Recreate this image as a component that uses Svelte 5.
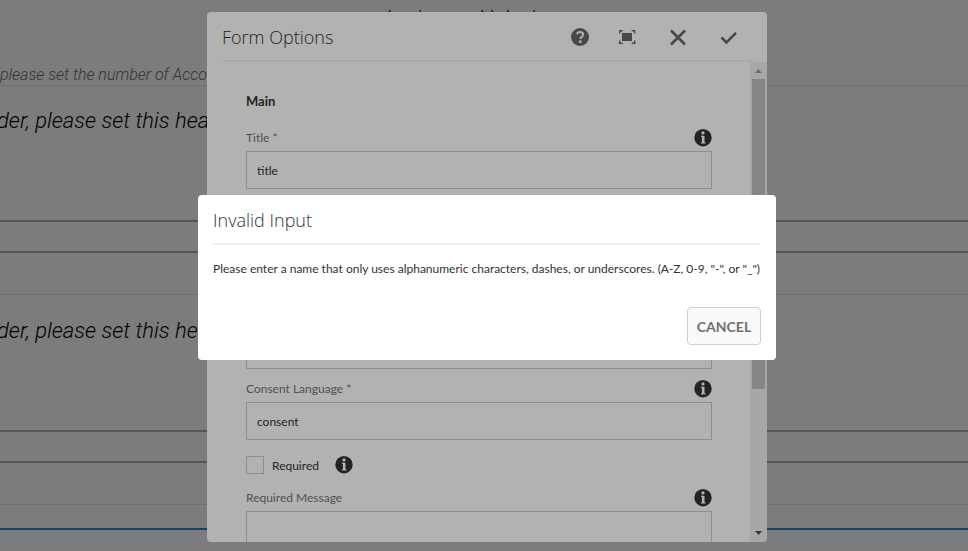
{#snippet info(label)}
  <button class="info" type="button" aria-label={label}>
    <svg viewBox="0 0 18 18" width="18" height="18" aria-hidden="true">
      <circle cx="9" cy="8.7" r="8.7" fill="#232323" />
      <circle cx="9" cy="3.9" r="1.6" fill="#b2b2b2" />
      <path d="M7 6.800h3.500v6.500h1v1.300H7v-1.300h.9V8.100H7z" fill="#b2b2b2" />
    </svg>
  </button>
{/snippet}

<div class="app">
  <main class="page">
    <p class="crumb">le mien moral à demi</p>
    <p class="note">please set the number of Accordion</p>
    <section class="panel">
      <h2>der, please set this header</h2>
      <div class="slot"></div>
    </section>
    <section class="panel">
      <h2>der, please set this header</h2>
      <div class="slot"></div>
    </section>
    <div class="end"></div>
  </main>

  <div class="layer">
    <div class="dialog" role="dialog" aria-labelledby="form-title">
      <header>
        <h1 id="form-title">Form Options</h1>
        <div class="actions">
          <button type="button" aria-label="Help">
            <svg viewBox="0 0 20 20" width="20" height="20"><circle cx="11" cy="10" r="9" fill="#484848" /><path d="M8 7.200c.4-1.600 1.500-2.200 3-2.200 1.900 0 3.100 1 3.100 2.600 0 2.200-2.700 2.300-2.700 4.400" fill="none" stroke="#b2b2b2" stroke-width="2" /><circle cx="11.300" cy="14.700" r="1.400" fill="#b2b2b2" /></svg>
          </button>
          <button type="button" aria-label="Toggle fullscreen">
            <svg viewBox="0 0 20 20" width="20" height="20"><path d="M3 6h10v8H3z" fill="#484848" /><path d="M.7 6.500V3.700h3M12.700 3.700h3v2.800M15.700 13.500v2.800h-3M3.700 16.300h-3v-2.800" fill="none" stroke="#484848" stroke-width="1.400" /></svg>
          </button>
          <button type="button" aria-label="Close">
            <svg viewBox="0 0 20 20" width="20" height="20"><path d="M2 3.500l14 14M16 3.500L2 17.500" fill="none" stroke="#484848" stroke-width="2.600" /></svg>
          </button>
          <button type="button" aria-label="Done">
            <svg viewBox="0 0 20 20" width="20" height="20"><path d="M2.500 10.500l5 5L17 5.800" fill="none" stroke="#484848" stroke-width="2.600" /></svg>
          </button>
        </div>
      </header>
      <div class="body">
        <form class="fields">
          <h3>Main</h3>
          <div class="row"><label for="title">Title *</label>{@render info('About title')}</div>
          <input id="title" type="text" value="title" />
          <div class="row gap"><label for="name">Name *</label></div>
          <input id="name" type="text" />
          <div class="row"><label for="consent">Consent Language *</label>{@render info('About consent language')}</div>
          <input id="consent" type="text" value="consent" />
          <div class="check"><input id="required" type="checkbox" /><label for="required">Required</label>{@render info('About required')}</div>
          <div class="row"><label for="message">Required Message</label>{@render info('About required message')}</div>
          <input id="message" type="text" />
        </form>
        <div class="scroll" aria-hidden="true">
          <svg viewBox="0 0 17 17" width="17" height="17"><path d="M5 11l3.500-4 3.500 4z" fill="#6c6c6c" /></svg>
          <div class="track"><div class="thumb"></div></div>
          <svg viewBox="0 0 17 17" width="17" height="17"><path d="M5 6l3.500 4L12 6z" fill="#353535" /></svg>
        </div>
      </div>
    </div>
  </div>

  <div class="layer front">
    <div class="alert" role="alertdialog" aria-labelledby="alert-title" aria-describedby="alert-text">
      <h2 id="alert-title">Invalid Input</h2>
      <p id="alert-text">Please enter a name that only uses alphanumeric characters, dashes, or underscores. (A-Z, 0-9, "-", or "_")</p>
      <button type="button">CANCEL</button>
    </div>
  </div>
</div>

<style>
  :global(body) { background: #7c7c7c; }
  .app, .app * { box-sizing: border-box; }
  .app {
    position: relative;
    height: 100vh;
    overflow: hidden;
    background: #7c7c7c;
    font-family: Lato, sans-serif;
    font-size: 12px;
    color: #232323;
  }
  h1, h2, h3, p { margin: 0; }
  button { padding: 0; border: 0; background: none; font: inherit; }
  svg { display: block; }

  .page { font-family: Roboto, sans-serif; white-space: nowrap; }
  .crumb { height: 62px; padding: 7px 44px 0 0; font-size: 16px; line-height: 20px; text-align: center; color: #111; }
  .note { height: 24px; border-bottom: 1px solid #65717c; font-size: 16px; line-height: 26px; font-style: italic; font-weight: 300; color: #333; }
  .panel { height: 209px; border-bottom: 1px solid #65717c; }
  .panel + .panel { height: 210px; }
  .panel h2 { height: 134px; padding-top: 20px; font-size: 22px; line-height: 30px; font-style: italic; font-weight: 300; text-indent: -3px; color: #000; }
  .panel + .panel h2 { height: 135px; padding-top: 21px; }
  .slot { height: 33px; border: solid #565656; border-width: 2px 0; }
  .end { height: 25px; border-bottom: 2px solid #12426c; }

  .layer {
    position: absolute;
    inset: 0;
    display: flex;
    justify-content: center;
    align-items: center;
    padding: 12px 0 9px 6px;
  }
  .front { padding-bottom: 8px; }

  .dialog {
    display: flex;
    flex-direction: column;
    width: 560px;
    height: 100%;
    border-radius: 4px;
    background: #b2b2b2;
    overflow: hidden;
  }
  header {
    display: flex;
    justify-content: space-between;
    flex: none;
    height: 50px;
    margin: 0 15px;
    border-bottom: 2px solid #a9a9a9;
  }
  h1, .alert h2 { font-family: "Open Sans", sans-serif; font-size: 18px; font-weight: 300; line-height: 50px; }
  .actions { display: flex; margin-right: -2px; }
  .actions button { display: grid; place-items: center; width: 50px; height: 50px; }
  .body { display: flex; flex: 1; min-height: 0; }
  .fields { flex: 1; padding: 24px 38px 0 39px; }
  h3 { margin-bottom: 2px; font-size: 13px; line-height: 30px; font-weight: 700; }
  .row { display: flex; justify-content: space-between; align-items: center; height: 33px; padding-top: 6px; color: #505050; }
  .gap { margin-top: 109px; }
  input[type="text"] {
    display: block;
    width: 100%;
    height: 38px;
    padding: 0 10px;
    border: 1px solid #8e8e8e;
    border-radius: 0;
    background: #b2b2b2;
    font: inherit;
    color: #232323;
    outline: 0;
  }
  .check { display: flex; align-items: center; height: 38px; padding-top: 12px; }
  .check input { appearance: none; width: 18px; height: 18px; margin: 0 8px 0 0; border: 1px solid #8e8e8e; }
  .check .info { margin-left: 16px; }
  .scroll { display: flex; flex-direction: column; width: 17px; background: #a7a7a7; }
  .track { flex: 1; padding: 0 2px; }
  .thumb { height: 69.5%; background: #868686; }

  .alert {
    display: flex;
    flex-direction: column;
    width: 578px;
    padding: 0 15px 15px;
    border-radius: 4px;
    background: #fff;
    color: #323232;
  }
  .alert h2 { height: 50px; border-bottom: 2px solid #f0f0f0; }
  .alert p { padding: 14px 0 28px; line-height: 20px; white-space: nowrap; }
  .alert button {
    align-self: flex-end;
    width: 74px;
    height: 38px;
    border: 1px solid #cfcfcf;
    border-radius: 4px;
    background: #fafafa;
    font-size: 14px;
    font-weight: 700;
    color: #707070;
  }
</style>
